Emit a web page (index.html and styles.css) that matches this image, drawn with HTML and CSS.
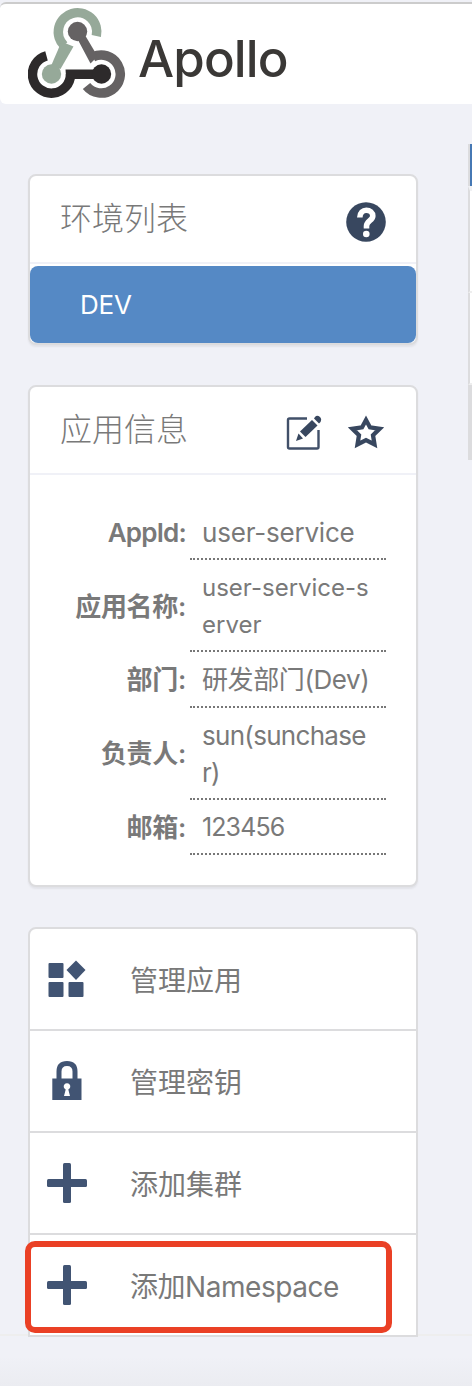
FILE: index.html
```html
<!DOCTYPE html>
<html lang="zh">
<head>
<meta charset="utf-8">
<title>Apollo</title>
<link rel="stylesheet" href="styles.css">
</head>
<body>
<header class="navbar">
  <svg class="logo" width="98" height="92" viewBox="28 7 98 92" fill="none">
    <path stroke="#96a999" stroke-width="9.5" d="M96.300 36A19.200 19.200 0 1 0 64 45.500"/>
    <path fill="#96a999" d="M60.500 44L66 43.500L73.500 46.500L60.500 69L51 66Z"/>
    <path stroke="#656263" stroke-width="9.500" d="M86.500 86A19 19 0 1 0 93 57"/>
    <path fill="#656263" d="M77.500 39L85.500 36L95 52L97 57L90.500 63.500Z"/>
    <path stroke="#2d2a2b" stroke-width="9.500" d="M46.500 55.800A19 19 0 1 0 70.500 74"/>
    <path fill="#2d2a2b" d="M65.500 69.500H101V79H74L66 76Z"/>
    <circle cx="51.500" cy="74" r="9.700" fill="#96a999"/>
    <circle cx="77.500" cy="31.500" r="9.700" fill="#656263"/>
    <circle cx="101.500" cy="74" r="9.700" fill="#2d2a2b"/>
  </svg>
  <span class="brand">Apollo</span>
</header>
<div class="layout">
  <main class="sidebar">
    <section class="card">
      <div class="card-head">
        <h2>环境列表</h2>
        <svg class="icon" width="40" height="40" viewBox="0 0 40 40"><circle cx="20" cy="20" r="19.800" fill="#38475f"/><path d="M13.800 15.500C14 10.500 17 8.300 20.300 8.300C24 8.300 26.800 10.500 26.800 14C26.800 18.500 20.500 19 20.500 24V26.500" fill="none" stroke="#fff" stroke-width="5.600"/><circle cx="20.300" cy="32" r="3.300" fill="#fff"/></svg>
      </div>
      <div class="env">DEV</div>
    </section>
    <section class="card">
      <div class="card-head">
        <h2>应用信息</h2>
        <div class="actions">
          <svg width="36" height="36" viewBox="0 0 36 36"><path d="M21 3.500H3.500Q2 3.500 2 5V32Q2 33.500 3.500 33.500H31Q32.500 33.500 32.500 32V15" fill="none" stroke="#415069" stroke-width="2.400"/><g fill="#38475f"><path d="M10 26L12.500 18.500L17 23.500Z"/><path d="M14 16.500L26 5L31.500 10.500L19.500 22Z"/><path d="M28 3.500L29 2Q31-.5 34 2Q36 4 34.500 7L33 8.500Z"/></g></svg>
          <svg width="36" height="34" viewBox="0 0 36 34"><path d="M18 5L22 12.400L31.500 13.800L25 20.200L26.500 29.500L18 25.200L9.500 29.500L11 20.200L4.500 13.800L14 12.400Z" fill="none" stroke="#38475f" stroke-width="4.300"/></svg>
        </div>
      </div>
      <dl class="info">
        <dt class="latin">AppId:</dt><dd>user-service</dd>
        <dt>应用名称:</dt><dd class="name">user-service-s<br>erver</dd>
        <dt>部门:</dt><dd class="dept">研发部门(Dev)</dd>
        <dt>负责人:</dt><dd class="owner">sun(sunchase<br>r)</dd>
        <dt>邮箱:</dt><dd class="mail">123456</dd>
      </dl>
    </section>
    <nav class="card menu">
      <a class="item"><svg width="40" height="40" viewBox="0 0 40 40" fill="#415473"><rect x="1.500" y="4" width="15" height="15" rx="1"/><rect x="1.500" y="23" width="15" height="15" rx="1"/><rect x="21.500" y="23" width="15" height="15" rx="1"/><path d="M29 1.500L38.500 11L29 21L19.500 11Z"/></svg>管理应用</a>
      <a class="item"><svg width="40" height="40" viewBox="0 0 40 40"><path d="M12 20V10.500Q12 2.500 20 2.500T28 10.500V20" fill="none" stroke="#415473" stroke-width="5"/><path fill="#415473" d="M5.300 17.500H34.500V39H5.300Z"/><path fill="#fff" d="M18.700 28.500A3.300 3.300 0 1 1 21.300 28.500L23 35H17Z"/></svg>管理密钥</a>
      <a class="item"><svg width="40" height="40" viewBox="0 0 40 40" fill="#415473"><rect x="16" width="8" height="40" rx="1.500"/><rect y="16" width="40" height="8" rx="1.500"/></svg>添加集群</a>
      <a class="item marked"><svg width="40" height="40" viewBox="0 0 40 40" fill="#415473"><rect x="16" width="8" height="40" rx="1.500"/><rect y="16" width="40" height="8" rx="1.500"/></svg>添加Namespace</a>
    </nav>
  </main>
  <aside class="content"><div class="tab"></div><div class="pane"></div><div class="pane short"></div><div class="strip"></div></aside>
</div>
<footer class="footer"></footer>
</body>
</html>
```
FILE: styles.css
```css
*, *::after { box-sizing: border-box; }
body { margin: 0; height: 1386px; overflow: hidden; background: #f0f1f7; color: #797979; font-family: Inter, "Noto Sans CJK SC", sans-serif; display: flex; flex-direction: column; }
.navbar { flex: none; height: 102px; border-top: 2px solid #ccc; margin-top: 2px; background: #fff; border-radius: 6px 0 0 6px; display: flex; padding: 3px 0 0 28px; }
.logo { flex: none; }
.brand { margin-left: 12px; font-size: 51px; line-height: 104px; height: 95px; font-weight: 500; color: #3a3836; letter-spacing: -.9px; }
.layout { display: flex; justify-content: space-between; height: 1230px; flex: none; }
.sidebar { position: relative; z-index: 1; width: 390px; margin: 70px 0 0 28px; display: flex; flex-direction: column; flex: none; }
.card { flex: none; background: #fff; border: 2px solid #dcdcde; border-radius: 8px; box-shadow: 0 2px 2px rgba(0,0,0,.06); margin-bottom: 40px; }
.card-head { height: 88px; border-bottom: 2px solid #f0f1f7; display: flex; justify-content: space-between; padding: 0 30px; }
h2 { margin: 0; font-size: 32px; line-height: 81px; font-weight: 300; font-family: "Noto Sans CJK SC", sans-serif; }
.icon { margin-top: 26px; }
.env { margin-top: 2px; height: 77px; line-height: 78px; background: #5589c5; border-radius: 8px; padding-left: 50px; color: #fff; font-size: 26px; letter-spacing: -.2px; }
.actions { display: flex; gap: 26px; padding: 28px 2px 0 0; }
.info { margin: 0; padding: 30px 30px 30px 0; display: grid; grid-template-columns: 156px 196px; column-gap: 4px; font-size: 26px; line-height: 37.14px; }
dt { font-weight: 600; text-align: right; align-self: center; letter-spacing: -.3px; }
.latin { letter-spacing: -.8px; }
dd { margin: 0; padding: 9px 0 7px 12px; border-bottom: 2px dotted #777; white-space: nowrap; letter-spacing: -.2px; }
.name { font-size: 24px; letter-spacing: 0; }
.dept { letter-spacing: -.4px; }
.owner { letter-spacing: -.7px; }
.mail { font-size: 25px; letter-spacing: -.9px; }
.menu { margin: 0; border-radius: 8px 8px 0 0; box-shadow: none; }
.item { position: relative; height: 102px; display: flex; align-items: center; gap: 43px; padding-left: 17px; font-size: 28px; border-bottom: 2px solid #dcdcde; letter-spacing: 0; }
.item:last-child { height: 100px; border: 0; }
.marked { letter-spacing: -.45px !important; }
.marked::after { content: ""; position: absolute; left: -5px; top: 6px; width: 367px; height: 92px; border: 6px solid #ea4025; border-radius: 10px; }
.content { width: 4px; margin-top: 40px; }
.tab { height: 42px; background: #4678b4; border-left: 2px solid #dcdcde; }
.pane { height: 107px; background: #fff; border-left: 2px solid #dcdcde; border-top: 5px solid #f0f1f4; border-bottom: 2px solid #eee; }
.pane.short { height: 92px; border-top: 0; }
.strip { height: 75px; background: #dcdcde; }
.footer { flex: 1; border-top: 2px solid #eee; background: linear-gradient(#f0f1f7 40%, #ebecf1); }
```
